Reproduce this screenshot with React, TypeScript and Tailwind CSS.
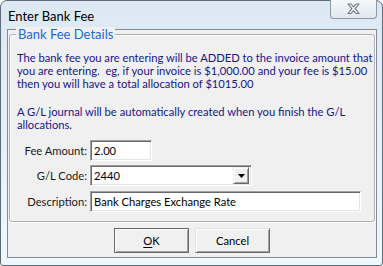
import React from "react";

const font = { fontFamily: "Lato, 'Liberation Sans', sans-serif" };

const Sunken = ({ className, children }: { className: string; children?: React.ReactNode }) => (
  <div
    className={`flex items-center bg-white border border-t-[#a0a0a0] border-l-[#a0a0a0] border-b-white border-r-white shadow-[inset_1px_1px_0_#696969,inset_-1px_-1px_0_#e3e3e3] ${className}`}
  >
    {children}
  </div>
);

const FieldRow = ({ label, mt, children }: { label: string; mt: string; children: React.ReactNode }) => (
  <div className={`flex items-center ${mt}`}>
    <div className="w-[77px] text-right text-[11.2px] leading-[14px] text-[#1a1a1a]">{label}</div>
    <div className="ml-[3px]">{children}</div>
  </div>
);

const App = () => {
  return (
    <div className="w-[383px] h-[266px] bg-white" style={font}>
      <div className="w-[383px] h-[266px] flex flex-col rounded-t-[7px] rounded-b-[3px] border border-[#5f6b77] bg-gradient-to-b from-[#dce9f5] to-[#eef8fd] pl-[6px] pr-[5px] pb-[7px]">
        {/* Title bar */}
        <div className="h-[28px] flex items-start justify-between">
          <div className="ml-[1px] pt-[8px] text-[13px] leading-[14px] text-black">Enter Bank Fee</div>
          <div className="-mt-[1px] w-[47px] h-[19px] flex items-center justify-center rounded-b-[4px] border border-t-0 border-[#8b98a6] bg-gradient-to-b from-[#f6f8fb] to-[#e1e8ef]">
            <svg width="13" height="12" viewBox="0 0 13 12">
              <path
                d="M1 1 L4 1 L6.5 3.8 L9 1 L12 1 L8.2 5.7 L12 10.5 L9 10.5 L6.5 7.6 L4 10.5 L1 10.5 L4.8 5.7 Z"
                fill="#f4f6f8"
                stroke="#6a7683"
                strokeWidth="1.1"
                strokeLinejoin="round"
              />
            </svg>
          </div>
        </div>

        {/* Client area */}
        <div className="h-[229px] flex flex-col border border-[#838b94] bg-[#f0f0f0] px-[1px]">
          <div className="relative mt-[4px] h-[188px] rounded-[3px] border border-[#a9b0b6] shadow-[inset_1px_1px_0_#ffffff,1px_1px_0_#ffffff] pl-[7px] pt-[16px]">
            <div className="absolute left-[6px] -top-[8px] px-[2px] bg-[#f0f0f0] text-[13px] leading-[14px] text-[#2468d8]">
              Bank Fee Details
            </div>

            <div className="text-[11.2px] leading-[13px] text-[#16168c] whitespace-pre">
              {"The bank fee you are entering will be ADDED to the invoice amount that\nyou are entering.  eg, if your invoice is $1,000.00 and your fee is $15.00\nthen you will have a total allocation of $1015.00"}
            </div>
            <div className="mt-[15px] text-[11.2px] leading-[13px] text-[#16168c] whitespace-pre">
              {"A G/L journal will be automatically created when you finish the G/L\nallocations."}
            </div>

            <div className="-ml-[7px]">
              <FieldRow label="Fee Amount:" mt="mt-[9px]">
                <Sunken className="w-[62px] h-[21px] pl-[3px]">
                  <span className="text-[11.2px] leading-[14px] text-black">2.00</span>
                </Sunken>
              </FieldRow>
              <FieldRow label="G/L Code:" mt="mt-[4px]">
                <Sunken className="w-[162px] h-[21px] pl-[3px] pr-[2px] justify-between">
                  <span className="text-[11.2px] leading-[14px] text-black">2440</span>
                  <div className="w-[16px] h-[17px] flex items-center justify-center bg-[#f0f0f0] border border-t-[#f0f0f0] border-l-[#f0f0f0] border-b-[#696969] border-r-[#696969] shadow-[inset_1px_1px_0_#ffffff,inset_-1px_-1px_0_#a0a0a0]">
                    <svg width="7" height="4" viewBox="0 0 7 4">
                      <path d="M0 0 H7 L3.5 4 Z" fill="#000" />
                    </svg>
                  </div>
                </Sunken>
              </FieldRow>
              <FieldRow label="Description:" mt="mt-[5px]">
                <Sunken className="w-[271px] h-[21px] pl-[3px]">
                  <span className="text-[11.2px] leading-[14px] text-black">Bank Charges Exchange Rate</span>
                </Sunken>
              </FieldRow>
            </div>
          </div>

          {/* Buttons */}
          <div className="mt-[6px] flex justify-center gap-[6px]">
            <button className="w-[75px] h-[25px] flex items-center justify-center bg-[#f0f0f0] border border-[#696969] shadow-[inset_1px_1px_0_#ffffff,inset_-1px_-1px_0_#a0a0a0] text-[11.2px] leading-[14px] text-black">
              <span>
                <span className="underline underline-offset-[2px]">O</span>K
              </span>
            </button>
            <button className="w-[75px] h-[25px] flex items-center justify-center bg-[#f0f0f0] border border-t-[#e3e3e3] border-l-[#e3e3e3] border-b-[#696969] border-r-[#696969] shadow-[inset_1px_1px_0_#ffffff,inset_-1px_-1px_0_#a0a0a0] text-[11.2px] leading-[14px] text-black">
              Cancel
            </button>
          </div>
        </div>
      </div>
    </div>
  );
};

export default App;
